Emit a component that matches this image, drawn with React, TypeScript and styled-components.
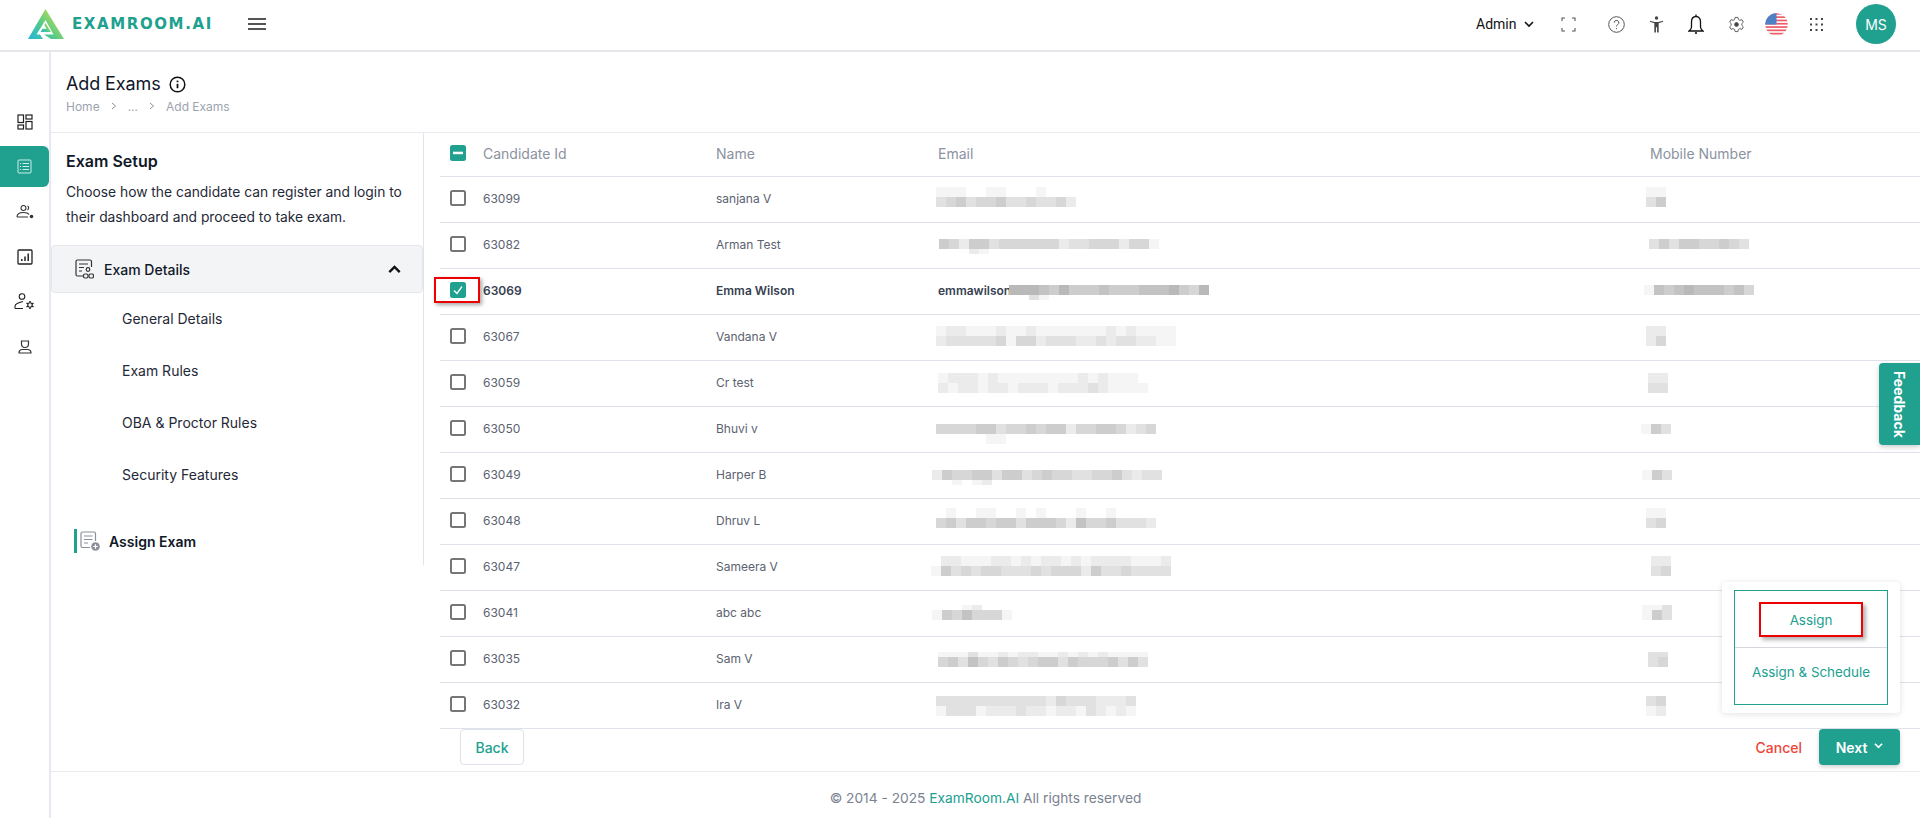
import * as React from 'react';
import styled, { createGlobalStyle } from 'styled-components';

const TEAL = '#20a08f';

const GlobalStyle = createGlobalStyle`
  html, body { margin: 0; padding: 0; background: #fff; }
  body { font-family: Inter, "Liberation Sans", sans-serif; color: #111827; overflow: hidden; }
  * { box-sizing: border-box; }
`;

const Page = styled.div`
  width: 1920px;
  height: 818px;
  display: flex;
  flex-direction: column;
  position: relative;
  overflow: hidden;
`;

/* ---------- top bar ---------- */

const TopBar = styled.header`
  height: 52px;
  flex: none;
  display: flex;
  align-items: center;
  border-bottom: 2px solid #e5e7eb;
  padding-left: 28px;
`;

const LogoMark = styled.svg`
  width: 36px;
  height: 30px;
  flex: none;
  margin-top: -2px;
`;

const LogoText = styled.span`
  font-family: "DejaVu Sans", sans-serif;
  font-weight: 700;
  font-size: 15px;
  letter-spacing: 1.6px;
  color: ${TEAL};
  margin-left: 8px;
  width: 176px;
  white-space: nowrap;
  margin-top: -2px;
`;

const Burger = styled.div`
  width: 18px;
  height: 12px;
  border-top: 2px solid #555;
  border-bottom: 2px solid #555;
  position: relative;
  margin-top: -3px;
  &::after {
    content: '';
    position: absolute;
    left: 0;
    right: 0;
    top: 3px;
    height: 2px;
    background: #555;
  }
`;

const TopRight = styled.div`
  margin-left: auto;
  display: flex;
  align-items: center;
  margin-top: -2px;
`;

const RoleLabel = styled.span`
  font-family: Roboto, "Liberation Sans", sans-serif;
  font-size: 14px;
  color: #111;
  width: 41px;
`;

const TopIconSlot = styled.div<{ $w: number; $gap?: number }>`
  width: ${({ $w }) => $w}px;
  margin-left: ${({ $gap }) => $gap ?? 0}px;
  display: flex;
  justify-content: center;
  align-items: center;
`;

const Avatar = styled.div`
  width: 40px;
  height: 40px;
  border-radius: 50%;
  background: ${TEAL};
  color: #fff;
  font-size: 14px;
  display: flex;
  align-items: center;
  justify-content: center;
  margin: 0 24px 0 20px;
`;

/* ---------- shell ---------- */

const Body = styled.div`
  flex: 1;
  display: flex;
  min-height: 0;
`;

const SideRail = styled.nav`
  width: 51px;
  flex: none;
  border-right: 2px solid #e8e9f0;
  padding-top: 49px;
  display: flex;
  flex-direction: column;
`;

const RailItem = styled.div<{ $active?: boolean }>`
  width: 49px;
  height: 41px;
  margin-bottom: 4px;
  display: flex;
  align-items: center;
  justify-content: center;
  border-radius: 0 6px 6px 0;
  background: ${({ $active }) => ($active ? TEAL : 'transparent')};
`;

const Main = styled.main`
  flex: 1;
  min-width: 0;
  display: flex;
  flex-direction: column;
`;

const PageHead = styled.div`
  height: 81px;
  flex: none;
  padding: 21px 0 0 15px;
  border-bottom: 1px solid #e9ebf0;
`;

const TitleRow = styled.div`
  display: flex;
  align-items: center;
  gap: 8px;
  height: 22px;
`;

const Title = styled.h1`
  margin: 0;
  font-size: 18px;
  line-height: 22px;
  font-weight: 400;
  letter-spacing: -0.1px;
  color: #0f172a;
`;

const Crumbs = styled.div`
  display: flex;
  align-items: center;
  font-size: 12px;
  color: #9ca3af;
  margin-top: 2px;
  height: 18px;
`;

const CrumbSep = styled.span`
  display: flex;
  margin: 0 11px;
`;

const Content = styled.div`
  flex: 1;
  min-height: 0;
  display: flex;
`;

/* ---------- exam setup panel ---------- */

const SetupPanel = styled.aside`
  width: 373px;
  height: 432px;
  flex: none;
  border-right: 1px solid #e1e4ec;
`;

const SetupIntro = styled.div`
  padding: 18px 15px 0;
  height: 112px;
`;

const SetupTitle = styled.h2`
  margin: 0 0 9px;
  font-size: 16px;
  line-height: 20px;
  font-weight: 600;
  color: #111827;
`;

const SetupText = styled.p`
  margin: 0;
  font-size: 13.8px;
  line-height: 24.5px;
  color: #1f2937;
`;

const AccordionHead = styled.div`
  height: 48px;
  width: 372px;
  background: #f3f4f6;
  border: 1px solid #e5e7eb;
  border-radius: 4px;
  display: flex;
  align-items: center;
  padding: 0 21px 0 23px;
  font-size: 14px;
  font-weight: 500;
  color: #111827;
`;

const AccordionLabel = styled.span`
  margin-left: 10px;
  flex: 1;
`;

const SubItem = styled.div`
  height: 52px;
  display: flex;
  align-items: center;
  padding-left: 71px;
  font-size: 14px;
  color: #1f2937;
  position: relative;
  top: -1px;
`;

const AssignItem = styled.div`
  margin: 28px 0 0 23px;
  height: 24px;
  display: flex;
  align-items: center;
  border-left: 3px solid ${TEAL};
  padding-left: 3px;
  gap: 9px;
  font-size: 14px;
  font-weight: 600;
  color: #111827;
`;

/* ---------- candidates table ---------- */

const TableCol = styled.section`
  flex: 1;
  min-width: 0;
  display: flex;
  flex-direction: column;
  padding-left: 16px;
`;

const TableRow = styled.div<{ $head?: boolean }>`
  display: grid;
  grid-template-columns: 43px 233px 214px 710px 1fr;
  height: ${({ $head }) => ($head ? '44px' : '46px')};
  flex: none;
  padding-bottom: 2px;
  border-bottom: 1px solid #dfe2ea;
  align-items: center;
  font-size: ${({ $head }) => ($head ? '14px' : '12px')};
  color: ${({ $head }) => ($head ? '#8b92a0' : '#5b6270')};
`;

const CheckCell = styled.div`
  position: relative;
  padding: 0 0 2px 10px;
  display: flex;
  align-items: center;
`;

const Checkbox = styled.span<{ $on?: boolean }>`
  width: 16px;
  height: 16px;
  border-radius: 2.5px;
  border: 2px solid ${({ $on }) => ($on ? TEAL : '#767676')};
  background: ${({ $on }) => ($on ? TEAL : '#fff')};
  display: flex;
  align-items: center;
  justify-content: center;
`;

const RedMark = styled.span`
  position: absolute;
  left: -6px;
  top: -5px;
  width: 46px;
  height: 26px;
  border: 2px solid #ee0000;
  box-shadow: 2px 2px 4px rgba(0, 0, 0, 0.35);
`;

const TextCell = styled.div<{ $bold?: boolean; $pad?: number }>`
  font-weight: ${({ $bold }) => ($bold ? 600 : 400)};
  color: ${({ $bold }) => ($bold ? '#374151' : 'inherit')};
  padding-left: ${({ $pad }) => $pad ?? 0}px;
  white-space: nowrap;
`;

const BlurCell = styled.div`
  height: 100%;
  display: flex;
  align-items: flex-start;
  font-weight: 600;
  color: #374151;
`;

const MailText = styled.span`
  margin: 15px 0 0 8px;
  line-height: 14px;
`;

const Mosaic = styled.div<{ $x: number; $y: number }>`
  margin: ${({ $y }) => $y}px 0 0 ${({ $x }) => $x}px;
  display: flex;
  flex-direction: column;
`;

const MosaicLine = styled.div<{ $short?: boolean }>`
  display: flex;
  height: ${({ $short }) => ($short ? 5 : 10)}px;
`;

const MosaicCell = styled.i<{ $d: number }>`
  width: 10px;
  height: 100%;
  background: ${({ $d }) => `rgb(${255 - $d * 10}, ${255 - $d * 10}, ${255 - $d * 10})`};
`;

/* ---------- actions ---------- */

const ActionBar = styled.div`
  height: 42px;
  flex: none;
  display: flex;
  align-items: flex-start;
  justify-content: space-between;
  padding: 0 20px;
`;

const BackButton = styled.button`
  width: 64px;
  height: 36px;
  border: 1px solid #dfe2ea;
  border-radius: 4px;
  background: #fff;
  color: ${TEAL};
  font: 500 14px Inter, sans-serif;
`;

const ActionsRight = styled.div`
  display: flex;
  align-items: center;
  gap: 17px;
  height: 36px;
`;

const CancelLink = styled.span`
  color: #f04438;
  font-size: 14px;
  font-weight: 500;
`;

const NextWrap = styled.div`
  position: relative;
`;

const NextButton = styled.button`
  width: 81px;
  height: 36px;
  border: 0;
  border-radius: 4px;
  background: ${TEAL};
  color: #fff;
  font: 600 14px Inter, sans-serif;
  display: flex;
  align-items: center;
  justify-content: center;
  gap: 7px;
  box-shadow: 0 2px 4px rgba(0, 0, 0, 0.18);
`;

const NextCaret = styled.span`
  display: flex;
  margin-bottom: 4px;
`;

const NextMenu = styled.div`
  position: absolute;
  right: 0;
  bottom: calc(100% + 16px);
  width: 178px;
  height: 131px;
  background: #fff;
  border-radius: 4px;
  box-shadow: 0 1px 6px rgba(0, 0, 0, 0.12);
  padding: 8px 12px;
`;

const MenuFrame = styled.div`
  height: 115px;
  border: 1px solid ${TEAL};
  display: flex;
  flex-direction: column;
  color: ${TEAL};
  font-size: 13.4px;
`;

const MenuTop = styled.div`
  height: 57px;
  flex: none;
  border-bottom: 1px solid #d5d8de;
  display: flex;
  align-items: flex-start;
  justify-content: center;
  padding-top: 11px;
`;

const MenuMark = styled.div`
  width: 104px;
  height: 35px;
  border: 2px solid #ee0000;
  box-shadow: 3px 3px 4px rgba(0, 0, 0, 0.3);
  display: flex;
  align-items: center;
  justify-content: center;
`;

const MenuBottom = styled.div`
  text-align: center;
  padding-top: 15px;
  line-height: 18px;
`;

const FeedbackTab = styled.div`
  position: absolute;
  right: 0;
  top: 363px;
  width: 41px;
  height: 82px;
  background: ${TEAL};
  border-radius: 4px 0 0 4px;
  color: #fff;
  font-size: 14px;
  font-weight: 700;
  writing-mode: vertical-rl;
  display: flex;
  align-items: center;
  justify-content: center;
  box-shadow: 0 2px 5px rgba(0, 0, 0, 0.2);
`;

const Footer = styled.footer`
  height: 47px;
  flex: none;
  border-top: 1px solid #e9ebf0;
  text-align: center;
  padding-top: 17px;
  font-size: 13.75px;
  line-height: 18px;
  color: #7b8290;
`;

const FooterBrand = styled.span`
  color: ${TEAL};
`;

/* ---------- icons ---------- */

function Logo() {
  return (
    <LogoMark viewBox="0 0 36 30">
      <defs>
        <linearGradient id="logoFill" x1="0" y1="1" x2="1" y2="0.2">
          <stop offset="0" stopColor="#27b4e0" />
          <stop offset="0.45" stopColor="#4fc98a" />
          <stop offset="1" stopColor="#d4e24a" />
        </linearGradient>
      </defs>
      <path
        fill="url(#logoFill)"
        d="M17.500 0 L36 30 L23 30 L16 25.500 L22 25.500 L25.500 25.500 L17.500 11 L8.500 25.500 L12 25.500 L15 30 L0 30 Z"
      />
      <path fill="url(#logoFill)" d="M17.500 14 L23 23 L12.500 23 L14.500 19.800 L18.500 19.800 L16.300 16 Z" />
    </LogoMark>
  );
}

function Chevron({ up, size = 10, color = '#111', width = 1.6 }: { up?: boolean; size?: number; color?: string; width?: number }) {
  return (
    <svg width={size} height={size} viewBox="0 0 10 10" fill="none" stroke={color} strokeWidth={width}>
      <path d={up ? 'M1 7 L5 3 L9 7' : 'M1 3 L5 7 L9 3'} />
    </svg>
  );
}

function CrumbArrow() {
  return (
    <svg width="6" height="8" viewBox="0 0 6 8" fill="none" stroke="#8b92a0" strokeWidth="1">
      <path d="M1 1 L4.500 4 L1 7" />
    </svg>
  );
}

function FullscreenIcon() {
  return (
    <svg width="15" height="15" viewBox="0 0 15 15" fill="none" stroke="#555" strokeWidth="1.100">
      <path d="M1 4 V1 H4 M11 1 H14 V4 M14 11 V14 H11 M4 14 H1 V11" />
    </svg>
  );
}

function HelpIcon() {
  return (
    <svg width="17" height="17" viewBox="0 0 17 17" fill="none" stroke="#555" strokeWidth="1">
      <circle cx="8.500" cy="8.500" r="7.800" />
      <path d="M6.200 6.700 a2.300 2.300 0 1 1 3.400 2 c-.8 .5 -1.100 .9 -1.100 1.800" />
      <path d="M8.500 12.200 v1" />
    </svg>
  );
}

function AccessIcon() {
  return (
    <svg width="15" height="17" viewBox="0 0 16 18">
      <circle cx="8" cy="2" r="1.800" fill="#444" />
      <path d="M1 5 L6 6.200 H10 L15 5 L15 6 L10.300 7.600 V17.500 H8.600 V12 H7.400 V17.500 H5.700 V7.600 L1 6 Z" fill="#444" />
    </svg>
  );
}

function BellIcon() {
  return (
    <svg width="16" height="21" viewBox="0 0 16 21" fill="none" stroke="#111" strokeWidth="1.3">
      <path d="M8 2.500 C4.800 2.500 3.500 5 3.500 8 V13 C3.500 15 2.500 16 1 17 H15 C13.500 16 12.500 15 12.500 13 V8 C12.500 5 11.200 2.500 8 2.500 Z" />
      <path d="M8 0.500 V2.500" />
      <circle cx="8" cy="19" r="1.100" fill="#111" stroke="none" />
    </svg>
  );
}

function GearIcon() {
  return (
    <svg width="17" height="17" viewBox="0 0 24 24" fill="none" stroke="#555" strokeWidth="1.300" strokeLinejoin="round">
      <path d="M10 2 h4 l.7 3 2 1.100 3-.9 2 3.500-2.200 2.100 v2.400 l2.200 2.100-2 3.500-3-.9-2 1.100-.7 3 h-4 l-.7-3-2-1.100-3 .9-2-3.500 2.200-2.100 v-2.400 L2.300 8.700 l2-3.500 3 .9 2-1.100 Z" />
      <circle cx="12" cy="12" r="2.700" fill="#444" />
    </svg>
  );
}

function FlagIcon() {
  const stripes = [0, 1, 2, 3, 4, 5, 6];
  return (
    <svg width="23" height="23" viewBox="0 0 23 23">
      <clipPath id="flagClip">
        <circle cx="11.500" cy="11.500" r="11.200" />
      </clipPath>
      <g clipPath="url(#flagClip)">
        <rect width="23" height="23" fill="#fff" />
        {stripes.map((s) => (
          <rect key={s} y={s * 3.300} width="23" height="1.700" fill="#ef5a68" />
        ))}
        <rect width="11.500" height="11.500" fill="#4f7fc4" />
      </g>
    </svg>
  );
}

function DotsIcon() {
  const dots = [2, 7.500, 13];
  return (
    <svg width="15" height="15" viewBox="0 0 15 15" fill="#444">
      {dots.map((y) => dots.map((x) => <rect key={`${x}-${y}`} x={x - 1} y={y - 1} width="2" height="2" />))}
    </svg>
  );
}

function InfoIcon() {
  return (
    <svg width="17" height="17" viewBox="0 0 17 17" fill="none" stroke="#111" strokeWidth="1.500">
      <circle cx="8.500" cy="8.500" r="7.300" />
      <path d="M8.500 7.800 V12.200" strokeWidth="1.800" />
      <path d="M8.500 4.600 V6.200" strokeWidth="1.800" />
    </svg>
  );
}

function RailDashboard() {
  return (
    <svg width="16" height="16" viewBox="0 0 16 16" fill="none" stroke="#222" strokeWidth="1.200">
      <rect x="1" y="1" width="5.500" height="7.500" />
      <rect x="9" y="1" width="6" height="4" />
      <rect x="1" y="11" width="5.500" height="4" />
      <rect x="9" y="7.500" width="6" height="7.500" />
    </svg>
  );
}

function RailExam() {
  return (
    <svg width="15" height="15" viewBox="0 0 15 15" fill="none" stroke="#cfeee9" strokeWidth="1">
      <rect x="1" y="1" width="13" height="13" rx="1" />
      <path d="M3 4.500 H4 M5.500 4.500 H12 M3 7.500 H4 M5.500 7.500 H12 M3 10.500 H4 M5.500 10.500 H12" />
    </svg>
  );
}

function RailCandidates() {
  return (
    <svg width="18" height="14" viewBox="0 0 18 14" fill="none" stroke="#333" strokeWidth="1.100">
      <circle cx="7.500" cy="3" r="2.500" />
      <path d="M1 12 C1 8.500 4 7.500 7.500 7.500 C10 7.500 12 8 13 9.500 M1 12 H12" />
      <path d="M11.500 1 C13 1.500 13 4 11.500 5" />
      <circle cx="15.500" cy="11.500" r="1.800" fill="#333" stroke="none" />
    </svg>
  );
}

function RailReports() {
  return (
    <svg width="16" height="16" viewBox="0 0 16 16" fill="none" stroke="#222" strokeWidth="1.300">
      <rect x="1" y="1" width="14" height="14" rx="1" />
      <path d="M4.800 12 V10 M8 12 V7.500 M11.200 12 V4.500" strokeWidth="1.500" />
    </svg>
  );
}

function RailUserCog() {
  return (
    <svg width="21" height="17" viewBox="0 0 21 17" fill="none" stroke="#222" strokeWidth="1.100">
      <circle cx="8" cy="3.500" r="2.800" />
      <path d="M1 15.500 V13 C1 11 5 9.500 9 8.500 M1 15.500 H9" />
      <circle cx="16" cy="12" r="2.200" />
      <path d="M16 8 V9.500 M16 14.500 V16 M12.500 10 L14 11 M18 13 L19.500 14 M12.500 14 L14 13 M18 11 L19.500 10" strokeWidth="1.500" />
    </svg>
  );
}

function RailUser() {
  return (
    <svg width="14" height="14" viewBox="0 0 14 14" fill="none" stroke="#333" strokeWidth="1.200">
      <path d="M3.500 1 H10.500 V4 C10.500 6 9 7.500 7 7.500 C5 7.500 3.500 6 3.500 4 Z" />
      <path d="M1 13 C1 10.500 3 9.500 4.500 9.500 H9.500 C11 9.500 13 10.500 13 13 Z" />
    </svg>
  );
}

function ExamDetailsIcon() {
  return (
    <svg width="19" height="20" viewBox="0 0 19 20" fill="none" stroke="#333" strokeWidth="1.200">
      <path d="M9 17 H2.500 C1.700 17 1 16.300 1 15.500 V2.500 C1 1.700 1.700 1 2.500 1 H15 C15.800 1 16.500 1.700 16.500 2.500 V8" />
      <path d="M4 5 H13 M4 8.500 H9 M4 12 H7" />
      <circle cx="13" cy="10.500" r="1.800" />
      <rect x="8.500" y="15" width="4.500" height="4" rx="1.500" />
      <rect x="14" y="15" width="4.500" height="4" rx="1.500" />
    </svg>
  );
}

function AssignExamIcon() {
  return (
    <svg width="20" height="20" viewBox="0 0 20 20" fill="none" stroke="#8a8f98" strokeWidth="1.200">
      <path d="M10 16.500 H2.500 C1.700 16.500 1 15.800 1 15 V2.500 C1 1.700 1.700 1 2.500 1 H14 C14.800 1 15.500 1.700 15.500 2.500 V10" />
      <path d="M4 5 H12.500 M4 8.500 H12.500 M4 12 H8" />
      <circle cx="15.500" cy="15.500" r="4.300" fill="#8a8f98" stroke="none" />
      <path d="M13.300 15.500 H17.700 M15.500 13.300 V17.700" stroke="#fff" />
    </svg>
  );
}

/* ---------- data ---------- */

interface Candidate {
  id: string;
  name: string;
  on?: boolean;
  text?: string;
  mx: number;
  mail: string[];
  px: number;
  phone: string[];
}

const OFFSETS = [10, 16, 16, 11, 12, 17, 17, 9, 11, 14, 15, 13];

const candidates: Candidate[] = [
  { id: '63099', name: 'sanjana V', mx: 6, mail: ['11100110001000', '34534453343342'], px: 6, phone: ['11', '35'] },
  { id: '63082', name: 'Arman Test', mx: 9, mail: ['5425534444442334442441', '~00021'], px: 9, phone: ['3535544543'] },
  { id: '63069', name: 'Emma Wilson', on: true, text: 'emmawilson', mx: -2, mail: ['77765755565556667547', '~0031'], px: 4, phone: ['16567666564'] },
  { id: '63067', name: 'Vandana V', mx: 6, mail: ['122111211211111112121111', '233333414423332232332211'], px: 6, phone: ['22', '24'] },
  { id: '63059', name: 'Cr test', mx: 8, mail: ['122212111111112121110', '212212212221222321111'], px: 8, phone: ['22', '33'] },
  { id: '63050', name: 'Bhuvi v', mx: 6, mail: ['4444553445455244554234', '00000110000'], px: 1, phone: ['153'] },
  { id: '63049', name: 'Harper B', mx: 2, mail: ['25445535534544334453233', '~001012'], px: 2, phone: ['153'] },
  { id: '63048', name: 'Dhruv L', mx: 6, mail: ['0100110010100010010000', '4535545535554264453332'], px: 6, phone: ['11', '34'] },
  { id: '63047', name: 'Sameera V', mx: 1, mail: ['022111221212212122221112', '153434433343444253343333'], px: 1, phone: ['022', '034'] },
  { id: '63041', name: 'abc abc', mx: 2, mail: ['~00012000', '15464441'], px: 2, phone: ['~113', '153'] },
  { id: '63035', name: 'Sam V', mx: 8, mail: ['~111311212211212121111', '453643543455354445353'], px: 8, phone: ['~33', '34'] },
  { id: '63032', name: 'Ira V', mx: 6, mail: ['33333333333243332223', '13331222322122132121'], px: 6, phone: ['34', '12'] },
];

function Pixels({ lines, x, y }: { lines: string[]; x: number; y: number }) {
  return (
    <Mosaic $x={x} $y={y}>
      {lines.map((line, i) => {
        const short = line.startsWith('~');
        return (
          <MosaicLine key={i} $short={short}>
            {line.replace('~', '').split('').map((c, j) => (
              <MosaicCell key={j} $d={Number(c)} />
            ))}
          </MosaicLine>
        );
      })}
    </Mosaic>
  );
}

const subItems = ['General Details', 'Exam Rules', 'OBA & Proctor Rules', 'Security Features'];

export default function App() {
  return (
    <>
      <GlobalStyle />
      <Page>
        <TopBar>
          <Logo />
          <LogoText>EXAMROOM.AI</LogoText>
          <Burger />
          <TopRight>
            <RoleLabel>Admin</RoleLabel>
            <TopIconSlot $w={24}>
              <Chevron />
            </TopIconSlot>
            <TopIconSlot $w={41} $gap={7}>
              <FullscreenIcon />
            </TopIconSlot>
            <TopIconSlot $w={40} $gap={7}>
              <HelpIcon />
            </TopIconSlot>
            <TopIconSlot $w={40}>
              <AccessIcon />
            </TopIconSlot>
            <TopIconSlot $w={40}>
              <BellIcon />
            </TopIconSlot>
            <TopIconSlot $w={40}>
              <GearIcon />
            </TopIconSlot>
            <TopIconSlot $w={40}>
              <FlagIcon />
            </TopIconSlot>
            <TopIconSlot $w={40}>
              <DotsIcon />
            </TopIconSlot>
            <Avatar>MS</Avatar>
          </TopRight>
        </TopBar>
        <Body>
          <SideRail>
            <RailItem><RailDashboard /></RailItem>
            <RailItem $active><RailExam /></RailItem>
            <RailItem><RailCandidates /></RailItem>
            <RailItem><RailReports /></RailItem>
            <RailItem><RailUserCog /></RailItem>
            <RailItem><RailUser /></RailItem>
          </SideRail>
          <Main>
            <PageHead>
              <TitleRow>
                <Title>Add Exams</Title>
                <InfoIcon />
              </TitleRow>
              <Crumbs>
                Home
                <CrumbSep><CrumbArrow /></CrumbSep>
                ...
                <CrumbSep><CrumbArrow /></CrumbSep>
                Add Exams
              </Crumbs>
            </PageHead>
            <Content>
              <SetupPanel>
                <SetupIntro>
                  <SetupTitle>Exam Setup</SetupTitle>
                  <SetupText>
                    Choose how the candidate can register and login to
                    <br />
                    their dashboard and proceed to take exam.
                  </SetupText>
                </SetupIntro>
                <AccordionHead>
                  <ExamDetailsIcon />
                  <AccordionLabel>Exam Details</AccordionLabel>
                  <Chevron up size={13} width={1.8} />
                </AccordionHead>
                {subItems.map((item) => (
                  <SubItem key={item}>{item}</SubItem>
                ))}
                <AssignItem>
                  <AssignExamIcon />
                  Assign Exam
                </AssignItem>
              </SetupPanel>
              <TableCol>
                <TableRow $head>
                  <CheckCell>
                    <Checkbox $on>
                      <svg width="10" height="4" viewBox="0 0 10 4">
                        <rect width="10" height="2.500" y="0.700" fill="#fff" />
                      </svg>
                    </Checkbox>
                  </CheckCell>
                  <TextCell>Candidate Id</TextCell>
                  <TextCell>Name</TextCell>
                  <TextCell $pad={8}>Email</TextCell>
                  <TextCell $pad={10}>Mobile Number</TextCell>
                </TableRow>
                {candidates.map((c, i) => (
                  <TableRow key={c.id}>
                    <CheckCell>
                      <Checkbox $on={c.on}>
                        {c.on && (
                          <svg width="12" height="12" viewBox="0 0 12 12" fill="none" stroke="#fff" strokeWidth="1.300">
                            <path d="M2 6.500 L5 9.500 L10 2.500" />
                          </svg>
                        )}
                      </Checkbox>
                      {c.on && <RedMark />}
                    </CheckCell>
                    <TextCell $bold={c.on}>{c.id}</TextCell>
                    <TextCell $bold={c.on}>{c.name}</TextCell>
                    <BlurCell>
                      {c.text && <MailText>{c.text}</MailText>}
                      <Pixels lines={c.mail} x={c.mx} y={OFFSETS[i]} />
                    </BlurCell>
                    <BlurCell>
                      <Pixels lines={c.phone} x={c.px} y={OFFSETS[i]} />
                    </BlurCell>
                  </TableRow>
                ))}
                <ActionBar>
                  <BackButton>Back</BackButton>
                  <ActionsRight>
                    <CancelLink>Cancel</CancelLink>
                    <NextWrap>
                      <NextButton>
                        Next
                        <NextCaret>
                          <Chevron size={9} color="#fff" width={1.8} />
                        </NextCaret>
                      </NextButton>
                      <NextMenu>
                        <MenuFrame>
                          <MenuTop>
                            <MenuMark>Assign</MenuMark>
                          </MenuTop>
                          <MenuBottom>Assign &amp; Schedule</MenuBottom>
                        </MenuFrame>
                      </NextMenu>
                    </NextWrap>
                  </ActionsRight>
                </ActionBar>
              </TableCol>
            </Content>
            <Footer>
              © 2014 - 2025 <FooterBrand>ExamRoom.AI</FooterBrand> All rights reserved
            </Footer>
          </Main>
        </Body>
        <FeedbackTab>Feedback</FeedbackTab>
      </Page>
    </>
  );
}
